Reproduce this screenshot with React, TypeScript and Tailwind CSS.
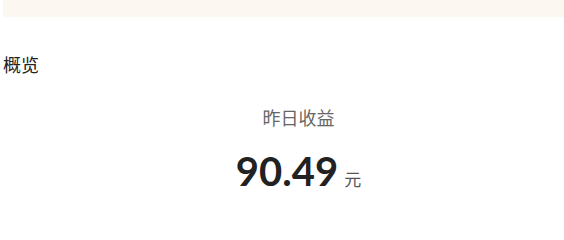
import React from "react";

export default function App() {
  return (
    <div className="w-[564px] h-[211px] bg-white overflow-hidden pl-[3px]" style={{ fontFamily: '"Noto Sans CJK SC", "Noto Sans", sans-serif' }}>
      <div className="h-[17px] bg-[#fdf7f1] rounded-bl-[3px]" />
      <div className="pt-[34px] text-[18px] leading-[26px] text-[#222]">概览</div>
      <div className="flex flex-col items-center pl-[30px]">
        <div className="mt-[27px] text-[18px] leading-[26px] text-[#666]">昨日收益</div>
        <div className="mt-[17px] flex items-baseline">
          <span className="text-[40px] leading-[48px] font-bold text-[#222]" style={{ fontFamily: 'Lato, "Noto Sans", sans-serif' }}>90.49</span>
          <span className="ml-[6px] text-[17px] text-[#555]">元</span>
        </div>
      </div>
    </div>
  );
}
